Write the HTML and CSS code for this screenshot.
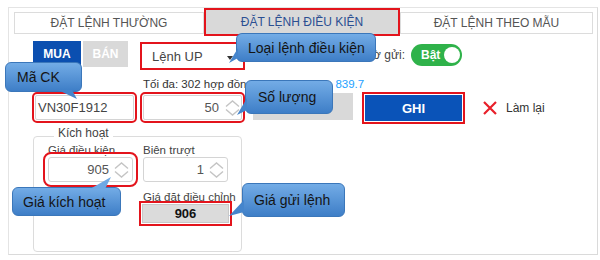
FILE: index.html
```html
<!DOCTYPE html>
<html lang="vi">
  <head>
    <meta charset="UTF-8" />
    <meta name="viewport" content="width=device-width, initial-scale=1.0" />
    <title>Đặt lệnh điều kiện</title>
    <link rel="stylesheet" href="styles.css">
  </head>
  <body>
    <div class="stage">
      <div class="panel">
        <div class="tabs">
          <div class="tab">ĐẶT LỆNH THƯỜNG</div>
          <div class="tab tab-active">ĐẶT LỆNH ĐIỀU KIỆN</div>
          <div class="tab">ĐẶT LỆNH THEO MẪU</div>
        </div>

        <div class="order-head">
          <div class="side">
            <span class="side-btn side-buy">MUA</span>
            <span class="side-btn side-sell">BÁN</span>
          </div>
          <div class="select">Lệnh UP<span class="caret"></span></div>
          <div class="pending">
            <span class="pending-label">Chờ gửi:</span>
            <span class="switch">Bật<span class="knob"></span></span>
          </div>
        </div>

        <div class="limits">
          <span class="limit-qty">Tối đa: 302 hợp đồng</span>
          <span class="limit-price">Giá khớp:</span>
          <span class="price-val">839.7</span>
        </div>

        <div class="order-inputs">
          <div class="field field-code">VN30F1912</div>
          <div class="field field-qty">
            <span>50</span>
            <svg class="spinner" width="15" height="16" viewBox="0 0 15 16"><polyline points="1,6.5 7.5,1 14,6.5" /><polyline points="1,9.5 7.5,15 14,9.5" /></svg>
          </div>
          <div class="field-price"></div>
          <div class="btn-save">GHI</div>
          <div class="reset">
            <svg width="14" height="14" viewBox="0 0 14 14"><path d="M1 1L13 13M13 1L1 13" /></svg>
            <span>Làm lại</span>
          </div>
        </div>

        <fieldset class="trigger">
          <legend>Kích hoạt</legend>
          <div class="trig-grid">
            <div class="trig-cell">
              <span class="trig-label">Giá điều kiện</span>
              <div class="spin-input spin-marked">
                <span>905</span>
                <svg class="spinner" width="15" height="16" viewBox="0 0 15 16"><polyline points="1,6.5 7.5,1 14,6.5" /><polyline points="1,9.5 7.5,15 14,9.5" /></svg>
              </div>
            </div>
            <div class="trig-cell">
              <span class="trig-label">Biên trượt</span>
              <div class="spin-input">
                <span>1</span>
                <svg class="spinner" width="15" height="16" viewBox="0 0 15 16"><polyline points="1,6.5 7.5,1 14,6.5" /><polyline points="1,9.5 7.5,15 14,9.5" /></svg>
              </div>
            </div>
            <div class="trig-cell trig-send">
              <span class="trig-label">Giá đặt điều chỉnh</span>
              <div class="send-price">906</div>
            </div>
          </div>
        </fieldset>
      </div>

      <!-- annotation callouts -->
      <div class="callout callout-type">Loại lệnh điều kiện</div>
      <div class="callout callout-code">Mã CK</div>
      <div class="callout callout-qty">Số lượng</div>
      <div class="callout callout-trigger">Giá kích hoạt</div>
      <div class="callout callout-send">Giá gửi lệnh</div>
    </div>
  </body>
</html>
```

FILE: styles.css
```css
body {
  margin: 0;
  background-color: #ffffff;
  font-family: "Liberation Sans", Arial, sans-serif;
  color: #333333;
}

.stage {
  position: relative;
  box-sizing: border-box;
  width: 600px;
  height: 260px;
  padding: 7px 0 0 8px;
}

.panel {
  width: 590px;
  height: 248px;
  box-sizing: border-box;
  border: 1px solid #e4e4e4;
  border-right-color: #dadada;
  border-bottom-color: #dadada;
}

/* tabs */
.tabs {
  display: flex;
  align-items: flex-start;
  height: 28px;
  padding-left: 5px;
}

.tab {
  box-sizing: border-box;
  width: 190px;
  height: 22px;
  margin-top: 4px;
  border: 1px solid #dcdcdc;
  display: flex;
  align-items: center;
  justify-content: center;
  font-size: 12px;
  color: #555555;
}

.tab:last-child {
  width: 193px;
}

.tab-active {
  width: 192px;
  height: 24px;
  margin: 2px 2px 0;
  background-color: #d9d9d9;
  border-color: #d9d9d9;
  color: #2b4f92;
  outline: 2px solid #e3141c;
}

/* buy / sell + order type */
.order-head {
  display: flex;
  align-items: flex-start;
  height: 29px;
  margin-top: 5px;
  padding-left: 24px;
}

.side {
  display: flex;
  gap: 2px;
}

.side-btn {
  height: 26px;
  display: flex;
  align-items: center;
  justify-content: center;
  font-size: 12px;
  font-weight: bold;
  color: #ffffff;
}

.side-buy {
  width: 48px;
  background-color: #0b4fb0;
}

.side-sell {
  width: 45px;
  background-color: #d9d9d9;
}

.select {
  box-sizing: border-box;
  width: 97px;
  height: 20px;
  margin: 5px 0 0 16px;
  padding: 0 8px;
  display: flex;
  align-items: center;
  font-size: 13px;
  color: #444444;
  background-color: #ffffff;
  outline: 2px solid #e3141c;
  outline-offset: 2px;
}

.caret {
  margin-left: auto;
  margin-top: 3px;
  border-left: 3px solid transparent;
  border-right: 3px solid transparent;
  border-top: 4px solid #333333;
}

.pending {
  width: 221px;
  height: 22px;
  margin-top: 3px;
  display: flex;
  align-items: center;
  justify-content: flex-end;
  gap: 6px;
}

.pending-label {
  font-size: 12px;
  color: #444444;
}

.switch {
  box-sizing: border-box;
  width: 51px;
  height: 22px;
  border-radius: 11px;
  background-color: #2fb24a;
  display: flex;
  align-items: center;
  padding: 0 2px 0 10px;
  font-size: 12px;
  font-weight: bold;
  color: #ffffff;
}

.knob {
  margin-left: auto;
  width: 16px;
  height: 16px;
  border-radius: 50%;
  background-color: #ffffff;
}

/* limits line */
.limits {
  display: flex;
  height: 14px;
  margin-top: 7px;
  padding-left: 134px;
  font-size: 11.5px;
  line-height: 14px;
  white-space: nowrap;
}

.limit-qty {
  width: 128px;
}

.price-val {
  margin-left: 14px;
  color: #1ea2ff;
}

/* inputs row */
.order-inputs {
  display: flex;
  align-items: flex-start;
  height: 32px;
  margin-top: 1px;
  padding-left: 26px;
}

.field {
  box-sizing: border-box;
  width: 99px;
  height: 25px;
  margin-top: 3px;
  border: 1px solid #d4d4d4;
  border-radius: 2px;
  display: flex;
  align-items: center;
  font-size: 13px;
  color: #444444;
  outline: 2px solid #e3141c;
  outline-offset: 1px;
}

.field-code {
  padding-left: 2px;
}

.field-qty {
  margin-left: 9px;
  justify-content: flex-end;
  gap: 6px;
  padding-right: 1px;
  color: #555555;
}

.spinner {
  display: block;
  fill: none;
  stroke: #c4c4c4;
  stroke-width: 1.4;
}

.field-price {
  width: 100px;
  height: 27px;
  margin: 1px 0 0 11px;
  background-color: #d9d9d9;
}

.btn-save {
  box-sizing: border-box;
  width: 99px;
  height: 28px;
  margin: 2px 0 0 11px;
  background-color: #0a53b8;
  border: 1px solid #ffffff;
  outline: 2px solid #e3141c;
  display: flex;
  align-items: center;
  justify-content: center;
  font-size: 13px;
  font-weight: bold;
  color: #ffffff;
}

.reset {
  height: 32px;
  margin-left: 20px;
  display: flex;
  align-items: center;
  gap: 9px;
  font-size: 12px;
  color: #333333;
}

.reset svg {
  stroke: #e8202a;
  stroke-width: 2.2;
}

/* trigger group */
.trigger {
  box-sizing: border-box;
  width: 209px;
  height: 126px;
  margin: 2px 0 0 24px;
  padding: 0 0 0 14px;
  border: 1px solid #dcdcdc;
  border-radius: 4px;
  min-width: 0;
}

.trigger legend {
  margin-left: 6px;
  padding: 0 4px 6px;
  font-size: 12px;
  line-height: 14px;
  color: #444444;
}

.trig-grid {
  display: grid;
  grid-template-columns: 85px 85px;
  column-gap: 10px;
  row-gap: 8px;
  margin-top: -3px;
}

.trig-cell {
  display: flex;
  flex-direction: column;
}

.trig-send {
  grid-column: 2;
}

.trig-label {
  font-size: 11.5px;
  line-height: 14px;
  color: #444444;
  white-space: nowrap;
}

.spin-input {
  box-sizing: border-box;
  height: 25px;
  border: 1px solid #d4d4d4;
  border-radius: 3px;
  display: flex;
  align-items: center;
  justify-content: flex-end;
  gap: 5px;
  padding-right: 3px;
  font-size: 13px;
  color: #555555;
}

.spin-marked {
  outline: 2px solid #e3141c;
  outline-offset: 3px;
}

.send-price {
  box-sizing: border-box;
  width: 87px;
  height: 19px;
  margin-left: -1px;
  background-color: #dbdbdb;
  border: 1px solid #c8c8c8;
  display: flex;
  align-items: center;
  justify-content: center;
  font-size: 13px;
  font-weight: bold;
  color: #111111;
  outline: 2px solid #e3141c;
  outline-offset: 1px;
}

/* callouts */
.callout {
  position: absolute;
  box-sizing: border-box;
  display: flex;
  align-items: center;
  padding-left: 11px;
  font-size: 14px;
  color: #141414;
  background: linear-gradient(to bottom, #73ace6, #3e7ec7);
  border: 1px solid #3b77ba;
  border-radius: 6px;
  white-space: nowrap;
}

.callout::after {
  content: "";
  position: absolute;
  background-color: #4585cc;
}

.callout-type {
  left: 236px;
  top: 33px;
  width: 140px;
  height: 29px;
}

.callout-type::after {
  left: -8px;
  top: 14px;
  width: 9px;
  height: 15px;
  clip-path: polygon(9px 0, 9px 10px, 0 15px);
}

.callout-code {
  left: 5px;
  top: 62px;
  width: 77px;
  height: 30px;
}

.callout-code::after {
  left: 52px;
  top: 27px;
  width: 19px;
  height: 9px;
  clip-path: polygon(0 0, 14px 0, 19px 9px);
}

.callout-qty {
  left: 245px;
  top: 80px;
  width: 88px;
  height: 34px;
  padding-left: 12px;
}

.callout-qty::after {
  left: -9px;
  top: 17px;
  width: 10px;
  height: 17px;
  clip-path: polygon(10px 0, 10px 12px, 0 17px);
}

.callout-trigger {
  left: 12px;
  top: 187px;
  width: 109px;
  height: 29px;
  padding-left: 10px;
}

.callout-trigger::after {
  left: 77px;
  top: -11px;
  width: 21px;
  height: 12px;
  background-color: #6ea8e4;
  clip-path: polygon(0 12px, 15px 12px, 21px 0);
}

.callout-send {
  left: 242px;
  top: 183px;
  width: 103px;
  height: 34px;
}

.callout-send::after {
  left: -14px;
  top: 16px;
  width: 15px;
  height: 16px;
  clip-path: polygon(15px 0, 15px 12px, 0 16px);
}
```
